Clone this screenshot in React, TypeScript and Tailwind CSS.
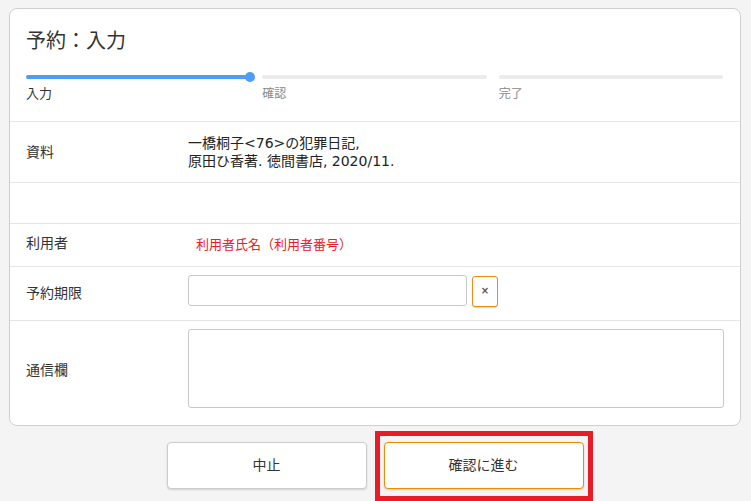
import React from "react";

export default function App() {
  const font = { fontFamily: '"DejaVu Sans", "Noto Sans CJK JP", sans-serif' };
  return (
    <div className="w-[751px] h-[501px] bg-[#f4f4f4] overflow-hidden text-[#333]" style={font}>
      <div className="pt-[8px] pl-[9px]">
        <div className="w-[732px] bg-white border border-[#cfcfcf] rounded-[8px] overflow-hidden">
          <div className="px-[16px] pt-[16px]">
            <h1 className="text-[20px] leading-[30px] font-normal text-[#333]" style={{ fontFamily: '"Noto Sans CJK JP", sans-serif' }}>予約：入力</h1>
            <div className="grid grid-cols-3 gap-x-[12px] mt-[20px] pr-[1px]">
              <div className="relative h-[4px] rounded-full bg-[#4a9ef6]">
                <div className="absolute right-[-5px] top-[-3px] w-[10px] h-[10px] rounded-full bg-[#4a9ef6]" />
              </div>
              <div className="h-[4px] rounded-full bg-[#ebebeb]" />
              <div className="h-[4px] rounded-full bg-[#ebebeb]" />
              <div className="text-[13px] leading-[18px] mt-[6px] text-[#333]">入力</div>
              <div className="text-[12px] leading-[18px] mt-[6px] text-[#888]">確認</div>
              <div className="text-[12px] leading-[18px] mt-[6px] text-[#888]">完了</div>
            </div>
          </div>
          <div className="mt-[18px] border-t border-[#e6e6e6]">
            <div className="grid grid-cols-[162px_1fr] items-center pl-[16px] h-[61px] border-b border-[#e6e6e6]">
              <div className="text-[14px]">資料</div>
              <div className="text-[14px] leading-[18px] text-[#222]">
                <div>一橋桐子&lt;76&gt;の犯罪日記,</div>
                <div>原田ひ香著. 徳間書店, 2020/11.</div>
              </div>
            </div>
            <div className="h-[41px] border-b border-[#e6e6e6]" />
            <div className="grid grid-cols-[162px_1fr] items-center pl-[16px] h-[43px] border-b border-[#e6e6e6]">
              <div className="text-[14px] -mt-[3px]">利用者</div>
              <div className="text-[13px] text-[#e8202a] pl-[8px]">利用者氏名（利用者番号）</div>
            </div>
            <div className="grid grid-cols-[162px_1fr] items-center pl-[16px] h-[54px] border-b border-[#e6e6e6]">
              <div className="text-[14px]">予約期限</div>
              <div className="flex items-start gap-[5px] -mt-[6px]">
                <input className="w-[279px] h-[31px] border border-[#c8c8c8] rounded-[3px] px-2 text-[14px] outline-none" />
                <button className="w-[26px] h-[31px] mt-[1px] border border-[#ef8c12] rounded-[3px] bg-white text-[10px] font-bold leading-none text-[#555] shadow-[0_1px_1px_rgba(0,0,0,0.15)] flex items-center justify-center">
                  ×
                </button>
              </div>
            </div>
            <div className="grid grid-cols-[162px_1fr] items-center pl-[16px] pr-[16px] pt-[8px] pb-[17px]">
              <div className="text-[14px] mt-[4px]">通信欄</div>
              <textarea className="w-[536px] h-[79px] border border-[#c8c8c8] rounded-[3px] resize-none outline-none block" />
            </div>
          </div>
        </div>
      </div>
      <div className="flex justify-center gap-[17px] mt-[16px] pr-[1px]">
        <button className="w-[200px] h-[47px] bg-white border border-[#cccccc] rounded-[4px] text-[14px] text-[#333] shadow-[0_1px_2px_rgba(0,0,0,0.15)]">
          中止
        </button>
        <div className="relative">
          <button className="w-[200px] h-[47px] bg-white border border-[#ee8a00] rounded-[4px] text-[14px] text-[#333] shadow-[0_1px_2px_rgba(0,0,0,0.15)]">
            確認に進む
          </button>
          <div className="absolute left-[-9px] top-[-11px] w-[218px] h-[70px] border-[5px] border-[#e81c26] pointer-events-none" />
        </div>
      </div>
    </div>
  );
}
